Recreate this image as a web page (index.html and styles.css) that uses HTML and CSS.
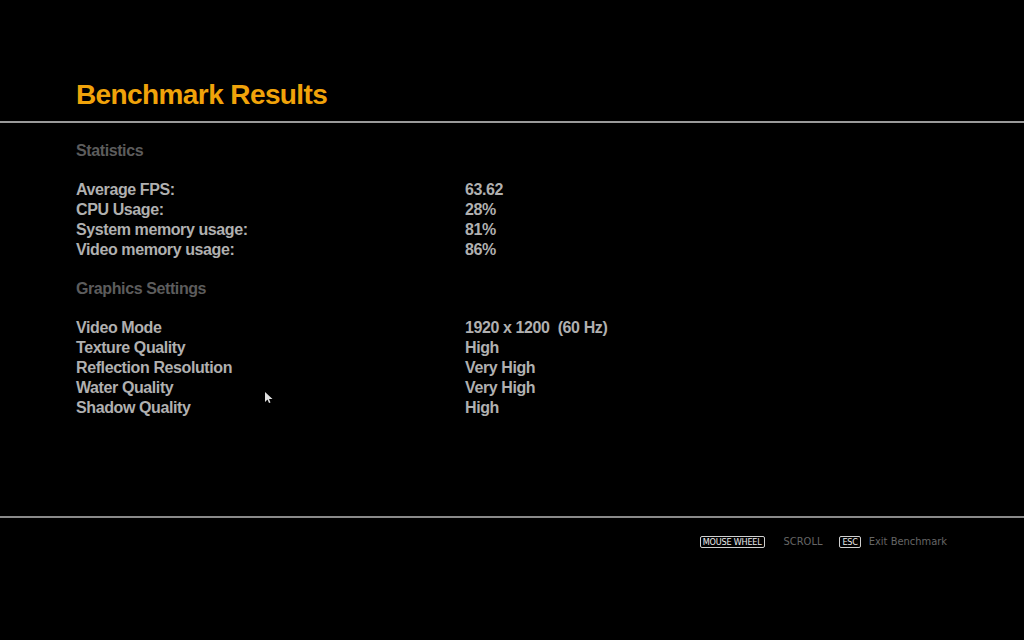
FILE: index.html
```html
<!DOCTYPE html>
<html>
<head>
<meta charset="utf-8">
<link rel="stylesheet" href="styles.css">
</head>
<body>
<div class="screen">
  <header class="head">
    <h1 class="title">Benchmark Results</h1>
  </header>
  <main class="content">
    <h2 class="section">Statistics</h2>
    <div class="rows">
      <div class="row"><span class="label">Average FPS:</span><span class="value">63.62</span></div>
      <div class="row"><span class="label">CPU Usage:</span><span class="value">28%</span></div>
      <div class="row"><span class="label">System memory usage:</span><span class="value">81%</span></div>
      <div class="row"><span class="label">Video memory usage:</span><span class="value">86%</span></div>
    </div>
    <h2 class="section">Graphics Settings</h2>
    <div class="rows">
      <div class="row"><span class="label">Video Mode</span><span class="value">1920 x 1200&nbsp; (60 Hz)</span></div>
      <div class="row"><span class="label">Texture Quality</span><span class="value">High</span></div>
      <div class="row"><span class="label">Reflection Resolution</span><span class="value">Very High</span></div>
      <div class="row"><span class="label">Water Quality</span><span class="value">Very High</span></div>
      <div class="row"><span class="label">Shadow Quality</span><span class="value">High</span></div>
    </div>
    <svg class="cursor" width="10" height="14" viewBox="0 0 10 14"><path d="M1 1 L1 11 L3.5 8.5 L5 12 L6.5 11.4 L5 8 L8.5 8 Z" fill="#e0e0e0"/></svg>
  </main>
  <footer class="foot">
    <span class="key key-wheel">MOUSE WHEEL</span><span class="hint hint-scroll">SCROLL</span>
    <span class="key key-esc">ESC</span><span class="hint">Exit Benchmark</span>
  </footer>
</div>
</body>
</html>
```
FILE: styles.css
```css
html, body {
  margin: 0;
  padding: 0;
  background: #000;
}
.screen {
  width: 1024px;
  height: 640px;
  background: #000;
  display: flex;
  flex-direction: column;
  font-family: "Liberation Sans", Arial, sans-serif;
}
.head {
  height: 123px;
  border-bottom: 2px solid #9a9a9a;
  box-sizing: border-box;
  padding: 0 0 0 76px;
  display: flex;
  align-items: flex-end;
}
.title {
  margin: 0 0 10px 0;
  font-size: 28px;
  font-weight: bold;
  color: #f0a30a;
  line-height: 32px;
  letter-spacing: -0.6px;
}
.content {
  position: relative;
  height: 395px;
  box-sizing: border-box;
  padding: 18px 0 0 76px;
  border-bottom: 2px solid #8a8a8a;
}
.section {
  margin: 0;
  font-size: 16px;
  font-weight: bold;
  color: #5c5c5c;
  line-height: 20px;
  height: 20px;
  letter-spacing: -0.4px;
}
.rows {
  margin: 19px 0 19px 0;
  display: flex;
  flex-direction: column;
}
.row {
  display: grid;
  grid-template-columns: 389px auto;
  font-size: 16px;
  font-weight: bold;
  color: #b0b0b0;
  line-height: 20px;
  height: 20px;
  letter-spacing: -0.4px;
}
.cursor {
  position: absolute;
  left: 264px;
  top: 268px;
}
.foot {
  display: flex;
  justify-content: flex-end;
  align-items: center;
  padding: 17px 77px 0 0;
  font-family: "DejaVu Sans Condensed", sans-serif;
  font-size: 11px;
}
.key {
  display: inline-flex;
  align-items: center;
  border: 1px solid #d0d0d0;
  border-radius: 2px;
  color: #ececec;
  padding: 0 2px;
  height: 12px;
  box-sizing: border-box;
  line-height: 10px;
  font-family: "DejaVu Sans Condensed", sans-serif;
  font-size: 9px;
  letter-spacing: -0.2px;
}
.key-wheel {
  margin-right: 19px;
}
.key-esc {
  margin-right: 8px;
}
.hint {
  color: #666;
  line-height: 13px;
}
.hint-scroll {
  margin-right: 17px;
}
```
